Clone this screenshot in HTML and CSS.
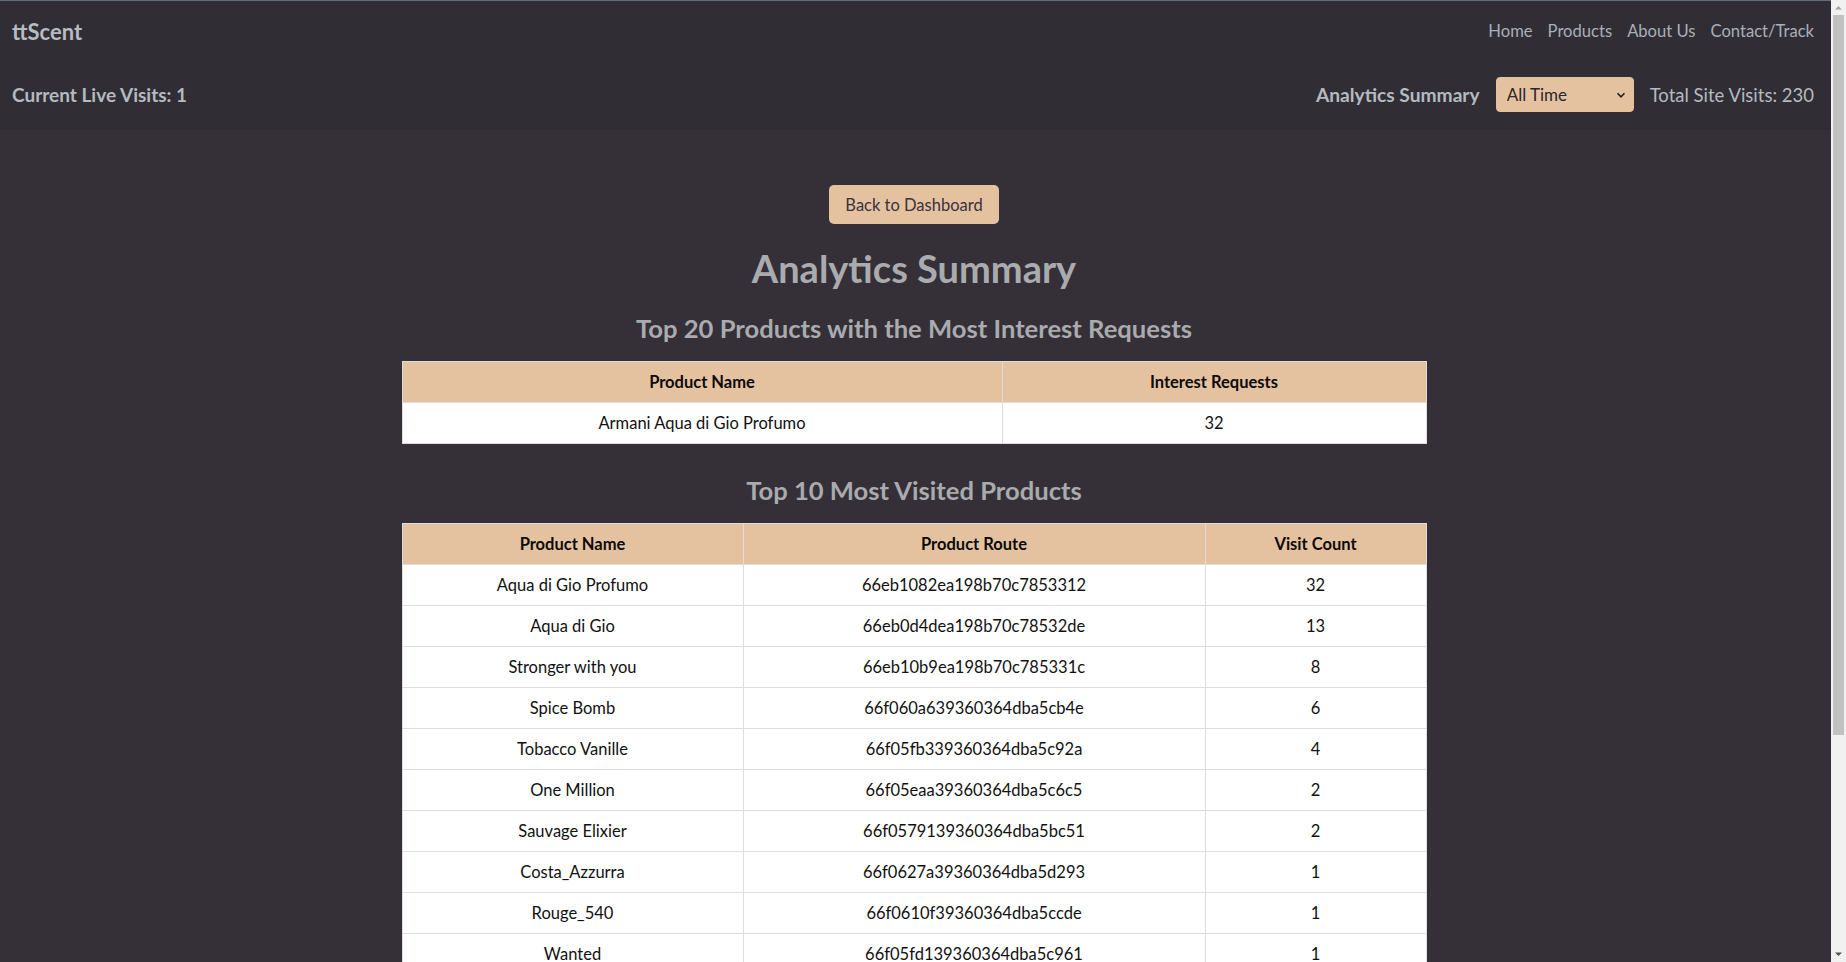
FILE: index.html
```html
<!DOCTYPE html>
<html lang="en">
<head>
<meta charset="utf-8">
<title>ttScent Analytics</title>
<link rel="stylesheet" href="styles.css">
</head>
<body>
<div class="page">
<header class="site-header">
  <div class="nav-row">
    <a class="brand" href="#">ttScent</a>
    <nav class="nav-links">
      <a href="#">Home</a>
      <a href="#">Products</a>
      <a href="#">About Us</a>
      <a href="#">Contact/Track</a>
    </nav>
  </div>
  <div class="stats-row">
    <div class="live">Current Live Visits: 1</div>
    <div class="stats-right">
      <span class="stats-label">Analytics Summary</span>
      <span class="select-wrap">
        <select class="range-select">
          <option>All Time</option>
          <option>Today</option>
          <option>This Week</option>
        </select>
        <svg class="chev" width="10" height="10" viewBox="0 0 10 10"><path d="M1.5 3.2 L5 6.8 L8.5 3.2" fill="none" stroke="#222" stroke-width="1.6"/></svg>
      </span>
      <span class="total">Total Site Visits: 230</span>
    </div>
  </div>
</header>

<main class="content">
  <button class="back-btn">Back to Dashboard</button>
  <h1 class="title">Analytics Summary</h1>

  <h2 class="subtitle first">Top 20 Products with the Most Interest Requests</h2>
  <table class="data-table">
    <colgroup><col class="c-name1"><col class="c-req"></colgroup>
    <thead><tr><th>Product Name</th><th>Interest Requests</th></tr></thead>
    <tbody><tr><td>Armani Aqua di Gio Profumo</td><td>32</td></tr></tbody>
  </table>

  <h2 class="subtitle second">Top 10 Most Visited Products</h2>
  <table class="data-table">
    <colgroup><col class="c-name2"><col class="c-route"><col class="c-count"></colgroup>
    <thead><tr><th>Product Name</th><th>Product Route</th><th>Visit Count</th></tr></thead>
    <tbody>
      <tr><td>Aqua di Gio Profumo</td><td>66eb1082ea198b70c7853312</td><td>32</td></tr>
      <tr><td>Aqua di Gio</td><td>66eb0d4dea198b70c78532de</td><td>13</td></tr>
      <tr><td>Stronger with you</td><td>66eb10b9ea198b70c785331c</td><td>8</td></tr>
      <tr><td>Spice Bomb</td><td>66f060a639360364dba5cb4e</td><td>6</td></tr>
      <tr><td>Tobacco Vanille</td><td>66f05fb339360364dba5c92a</td><td>4</td></tr>
      <tr><td>One Million</td><td>66f05eaa39360364dba5c6c5</td><td>2</td></tr>
      <tr><td>Sauvage Elixier</td><td>66f0579139360364dba5bc51</td><td>2</td></tr>
      <tr><td>Costa_Azzurra</td><td>66f0627a39360364dba5d293</td><td>1</td></tr>
      <tr><td>Rouge_540</td><td>66f0610f39360364dba5ccde</td><td>1</td></tr>
      <tr><td>Wanted</td><td>66f05fd139360364dba5c961</td><td>1</td></tr>
    </tbody>
  </table>
</main>
</div>
<div class="scrollbar">
  <svg class="sb-arrow" width="15" height="15" viewBox="0 0 15 15"><path d="M4 9.5 L7.5 6 L11 9.5 Z" fill="#a3a3a3"/></svg>
  <div class="sb-track"><div class="sb-thumb"></div></div>
  <svg class="sb-arrow" width="15" height="15" viewBox="0 0 15 15"><path d="M4 5.5 L7.5 9 L11 5.5 Z" fill="#505050"/></svg>
</div>
</body>
</html>
```

FILE: styles.css
```css
html, body {
  margin: 0;
  padding: 0;
}
body {
  background: #353037;
  font-family: Lato, "Open Sans", "Noto Sans", sans-serif;
  color: #a9abae;
  display: flex;
  align-items: flex-start;
}
a { text-decoration: none; }

.page {
  flex: 1;
  min-width: 0;
  border-top: 1px solid #62707a;
}

.site-header {
  background: #312d34;
  height: 127px;
  display: flex;
  flex-direction: column;
  padding: 0 17px 0 12px;
  box-shadow: 0 1px 2px rgba(0,0,0,0.15);
}
.nav-row {
  height: 60px;
  display: flex;
  align-items: center;
  justify-content: space-between;
}
.brand {
  font-size: 22px;
  font-weight: 700;
  color: #b7bcc1;
}
.nav-links {
  display: flex;
  gap: 15px;
}
.nav-links a {
  font-size: 16.6px;
  color: #a8b0b8;
}
.stats-row {
  height: 67px;
  display: flex;
  align-items: center;
  justify-content: space-between;
}
.live {
  font-size: 19px;
  font-weight: 700;
  color: #b4bac0;
}
.stats-right {
  display: flex;
  align-items: center;
  gap: 16px;
}
.stats-label {
  font-size: 19.2px;
  font-weight: 700;
  color: #b4bac0;
}
.select-wrap {
  position: relative;
  display: inline-block;
}
.range-select {
  appearance: none;
  -webkit-appearance: none;
  width: 138px;
  height: 35px;
  background: #e5c29f;
  border: 1px solid #e5c29f;
  border-radius: 4px;
  font-family: inherit;
  font-size: 17px;
  color: #2a2630;
  padding: 0 10px;
}
.chev {
  position: absolute;
  right: 8px;
  top: 13px;
  pointer-events: none;
}
.total {
  font-size: 18.5px;
  color: #b4bac0;
}

.content {
  display: flex;
  flex-direction: column;
  align-items: center;
  padding-top: 57px;
  padding-right: 3px;
}
.back-btn {
  height: 39px;
  padding: 0 16px;
  background: #e5c29f;
  border: none;
  border-radius: 5px;
  font-family: inherit;
  font-size: 16.5px;
  color: #38333b;
}
.title {
  margin: 22px 0 0;
  font-size: 38px;
  line-height: 44px;
  font-weight: 700;
  color: #a9abae;
}
.subtitle {
  font-size: 25.6px;
  line-height: 30px;
  font-weight: 700;
  color: #a9abae;
  margin: 0;
}
.subtitle.first { margin-top: 23px; margin-bottom: 18px; }
.subtitle.second { margin-top: 31px; margin-bottom: 18px; }

.data-table {
  width: 1024px;
  border-collapse: collapse;
  background: #ffffff;
  border: 1px solid #dddddd;
  table-layout: fixed;
}
.data-table th,
.data-table td {
  border: 1px solid #dddddd;
  height: 40px;
  padding: 0 10px;
  text-align: center;
  font-size: 16.5px;
  color: #111;
}
.data-table th {
  background: #e5c29f;
  font-weight: 700;
  color: #0c0a0a;
}
.c-name1 { width: 600px; }
.c-req { width: 424px; }
.c-name2 { width: 341px; }
.c-route { width: 462px; }
.c-count { width: 221px; }

.scrollbar {
  position: sticky;
  top: 0;
  width: 15px;
  height: 962px;
  flex: 0 0 15px;
  background: #f1f1f1;
  display: flex;
  flex-direction: column;
}
.sb-arrow {
  display: block;
  flex: 0 0 15px;
}
.sb-track {
  flex: 1;
  padding: 0 2px;
}
.sb-thumb {
  height: 720px;
  background: #c1c1c1;
}
```
